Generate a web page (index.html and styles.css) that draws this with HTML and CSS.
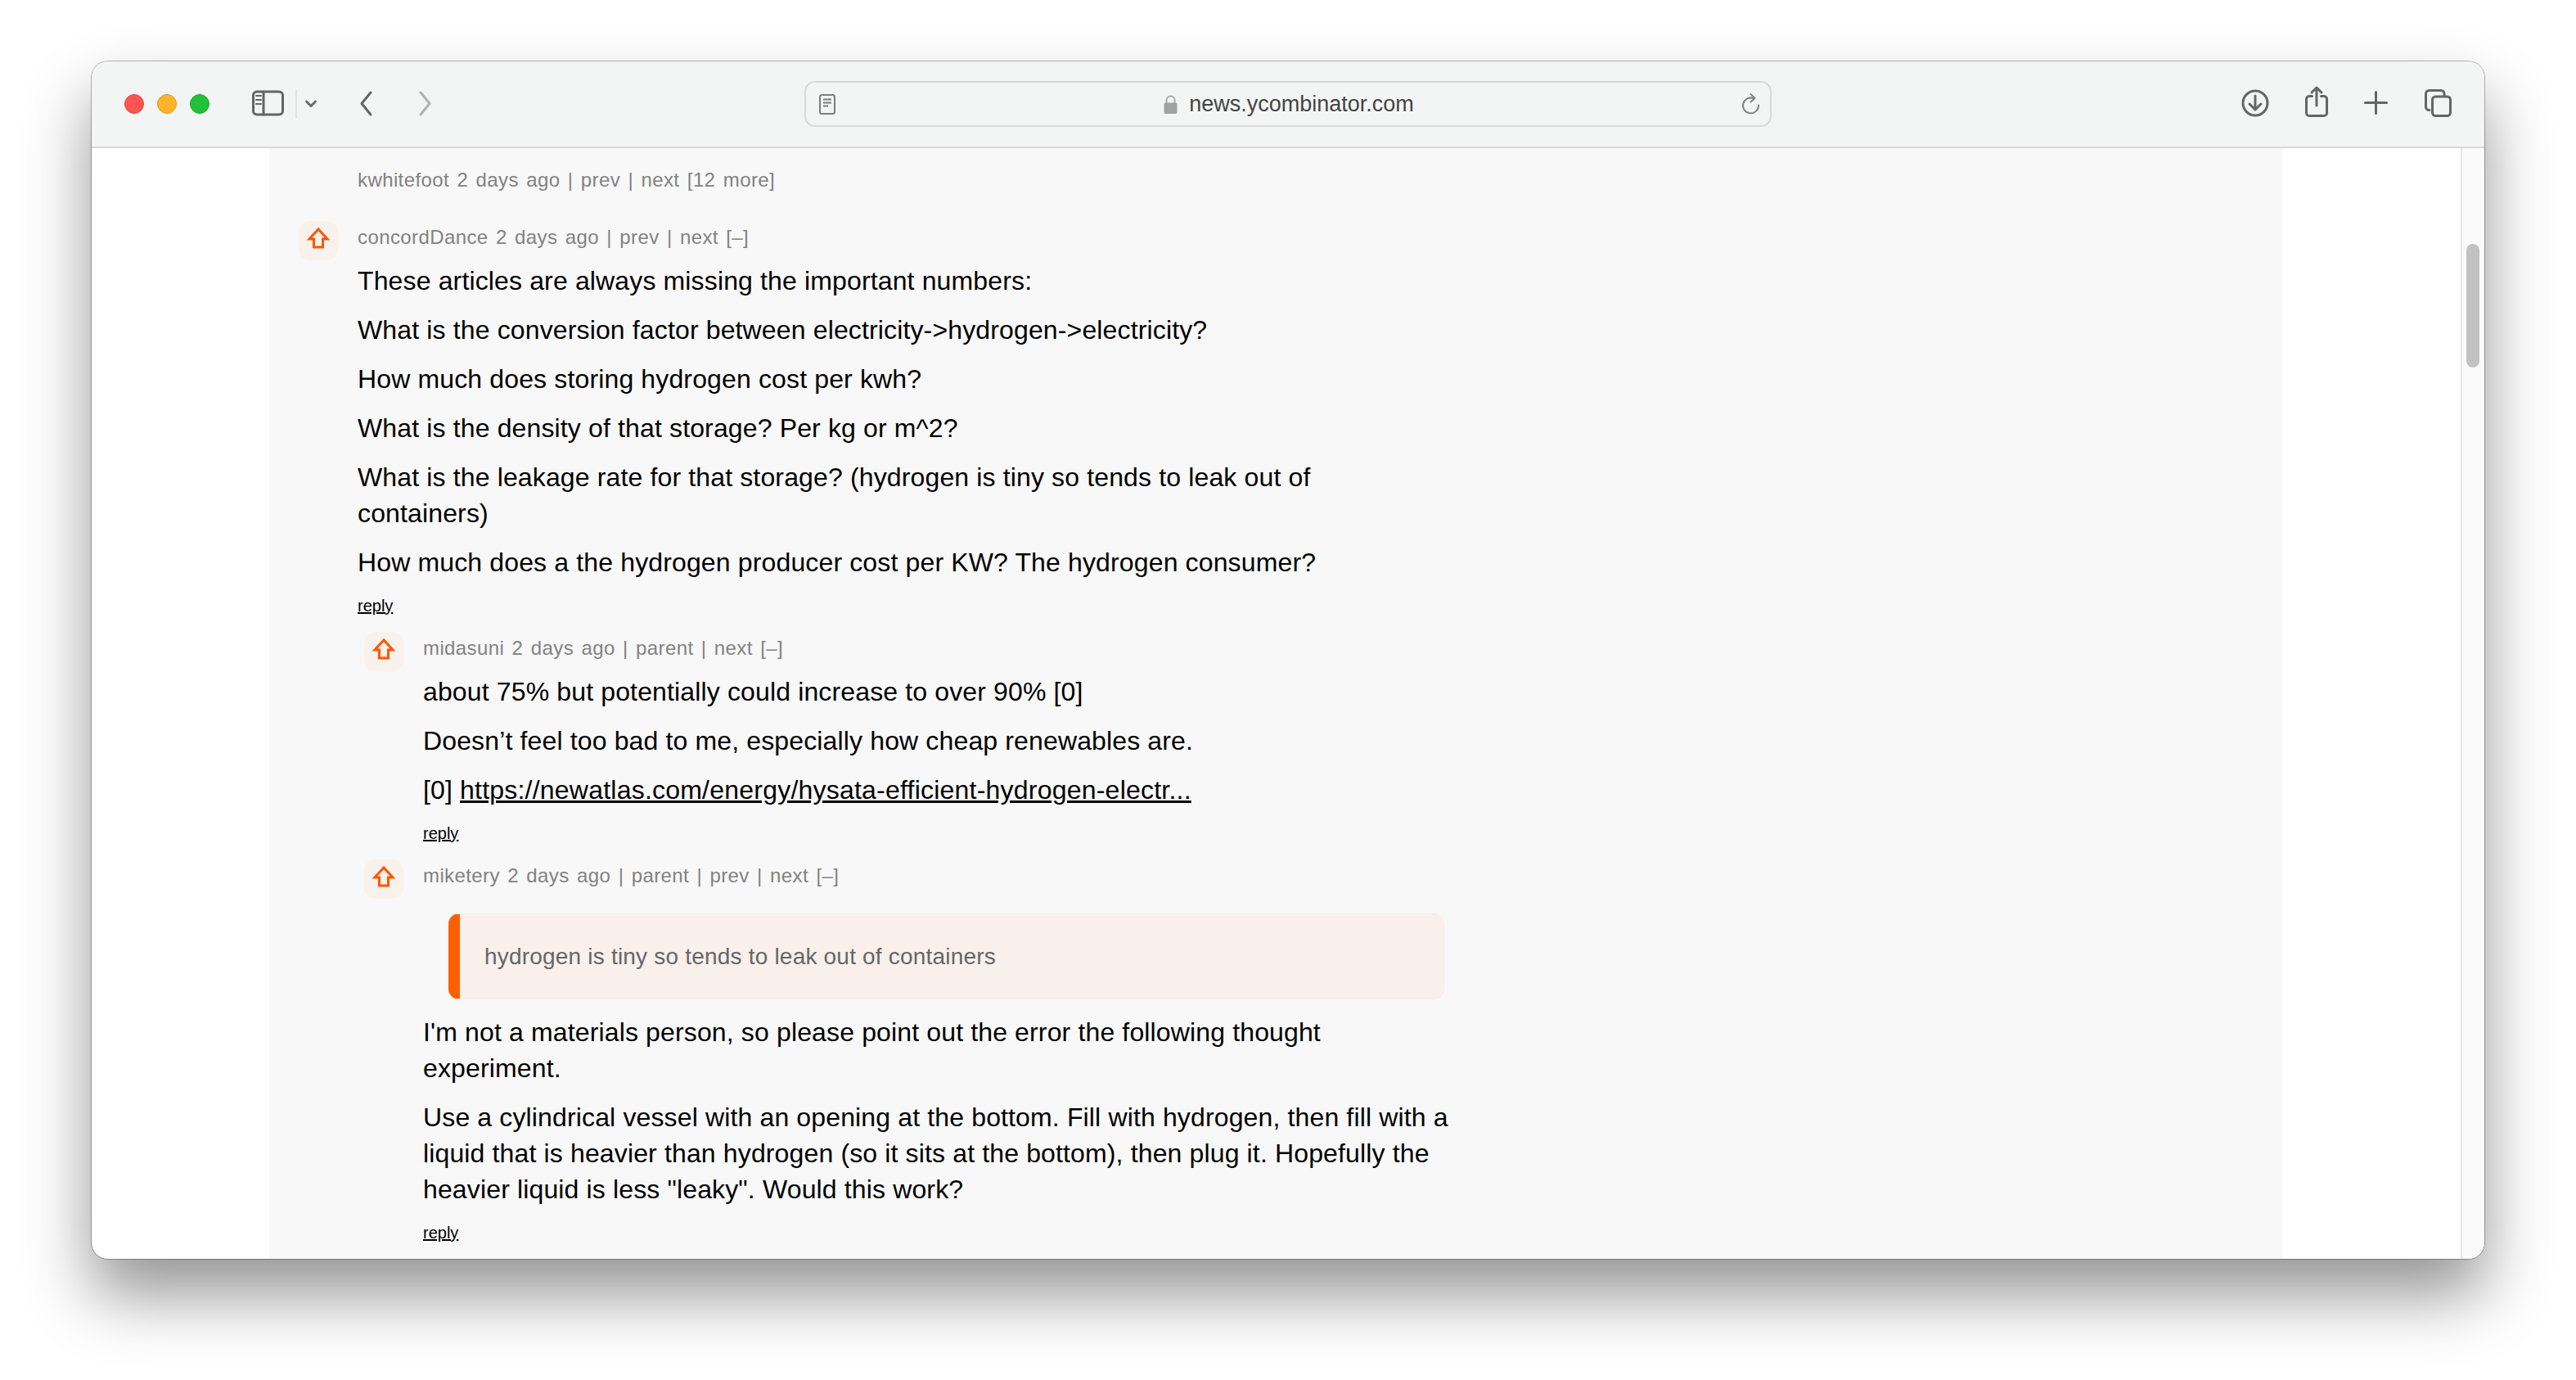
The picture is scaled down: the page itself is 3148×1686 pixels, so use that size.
FILE: index.html
```html
<!DOCTYPE html>
<html lang="en">
<head>
<meta charset="utf-8">
<title>news.ycombinator.com</title>
<link rel="stylesheet" href="styles.css">
</head>
<body>
<div class="window">
  <header class="toolbar">
    <div class="lights">
      <span class="light red"></span>
      <span class="light yellow"></span>
      <span class="light green"></span>
    </div>
    <svg class="ico w39 sidebar-ico" viewBox="0 0 39 36"><rect x="1.5" y="3" width="36" height="28" rx="4.5"/><path d="M14 3v28"/><path class="thin" d="M5 8h6M5 13h6M5 18h6"/></svg>
    <span class="divider"></span>
    <svg class="ico w14 chevron" viewBox="0 0 14 36"><path d="M1.5 15L7 20.5 12.5 15"/></svg>
    <svg class="ico w16 back" viewBox="0 0 16 36"><path d="M14 4L3 17.5 14 31"/></svg>
    <svg class="ico w15 forward" viewBox="0 0 15 36"><path d="M2 4L13 17.5 2 31"/></svg>
    <div class="urlbar">
      <svg class="reader" viewBox="0 0 20 25"><rect x="1" y="1" width="18" height="23" rx="2.5"/><path d="M5 6.5h10M5 10.5h10M5 14.5h6"/></svg>
      <div class="address">
        <svg class="lock" viewBox="0 0 17 23"><path class="shackle" d="M3.5 11V6.5a5 5 0 0 1 10 0V11"/><rect class="lockbody" x="0.5" y="9.5" width="16" height="13.5" rx="2"/></svg>
        <span class="host">news.ycombinator.com</span>
      </div>
      <svg class="refresh" viewBox="0 0 22 26"><path d="M14.5 6.3A9.5 9.5 0 1 0 20 14.5"/><path d="M10.5 1l5 5-5 4.5"/></svg>
    </div>
    <svg class="ico w32 download" viewBox="0 0 32 36"><circle cx="16" cy="17" r="15"/><path d="M16 8v17M9 18l7 7 7-7"/></svg>
    <svg class="ico w28 share" viewBox="0 0 28 36"><path d="M8.5 8.5H5A3.5 3.5 0 0 0 1.5 12v17A3.5 3.5 0 0 0 5 32.5h18a3.5 3.5 0 0 0 3.5-3.5V12A3.5 3.5 0 0 0 23 8.5h-3.5"/><path d="M14 20V-2M8 4l6-6 6 6"/></svg>
    <svg class="ico w27 plus" viewBox="0 0 27 36"><path d="M0.5 16.5h26M13.5 3.5v26"/></svg>
    <svg class="ico w33 tabs" viewBox="0 0 33 36"><path d="M6 25.5H5.500A4 4 0 0 1 1.500 21.500V5.500A4 4 0 0 1 5.500 1.500H20A4 4 0 0 1 24 5.500V8"/><rect x="9.500" y="9" width="22" height="23.500" rx="4"/></svg>
  </header>
  <main class="viewport">
    <div class="page">
      <div class="panel">
        <div class="meta top-meta">kwhitefoot 2 days ago | prev | next [12 more]</div>

        <article class="comment">
          <div class="vote"><svg class="arrow" viewBox="0 0 26 26"><path d="M13 2L2 14h5.500v10h11V14H24z"/></svg></div>
          <div class="body">
            <div class="meta">concordDance 2 days ago | prev | next [–]</div>
            <p>These articles are always missing the important numbers:</p>
            <p>What is the conversion factor between electricity-&gt;hydrogen-&gt;electricity?</p>
            <p>How much does storing hydrogen cost per kwh?</p>
            <p>What is the density of that storage? Per kg or m^2?</p>
            <p>What is the leakage rate for that storage? (hydrogen is tiny so tends to leak out of containers)</p>
            <p>How much does a the hydrogen producer cost per KW? The hydrogen consumer?</p>
            <a class="reply">reply</a>
          </div>
        </article>

        <article class="comment nested">
          <div class="vote"><svg class="arrow" viewBox="0 0 26 26"><path d="M13 2L2 14h5.500v10h11V14H24z"/></svg></div>
          <div class="body">
            <div class="meta">midasuni 2 days ago | parent | next [–]</div>
            <p>about 75% but potentially could increase to over 90% [0]</p>
            <p>Doesn’t feel too bad to me, especially how cheap renewables are.</p>
            <p>[0] <a class="link">https://newatlas.com/energy/hysata-efficient-hydrogen-electr...</a></p>
            <a class="reply">reply</a>
          </div>
        </article>

        <article class="comment nested">
          <div class="vote"><svg class="arrow" viewBox="0 0 26 26"><path d="M13 2L2 14h5.500v10h11V14H24z"/></svg></div>
          <div class="body">
            <div class="meta">miketery 2 days ago | parent | prev | next [–]</div>
            <blockquote class="quote">hydrogen is tiny so tends to leak out of containers</blockquote>
            <p>I'm not a materials person, so please point out the error the following thought experiment.</p>
            <p>Use a cylindrical vessel with an opening at the bottom. Fill with hydrogen, then fill with a liquid that is heavier than hydrogen (so it sits at the bottom), then plug it. Hopefully the heavier liquid is less "leaky". Would this work?</p>
            <a class="reply">reply</a>
          </div>
        </article>
      </div>
    </div>
    <aside class="gutter"><span class="thumb"></span></aside>
  </main>
</div>
</body>
</html>
```

FILE: styles.css
```css
* { box-sizing: border-box; }

html, body {
  margin: 0;
  height: 100%;
  background: #fff;
  overflow: hidden;
}

body {
  padding: 75px 112px 0;
  font-family: "Liberation Sans", Arial, sans-serif;
}

.window {
  width: 2924px;
  height: 1463px;
  border-radius: 20px;
  background: #fff;
  overflow: hidden;
  display: flex;
  flex-direction: column;
  box-shadow: 0 0 0 1px rgba(0, 0, 0, .28), 0 44px 80px rgba(0, 0, 0, .42);
}

.toolbar {
  flex: none;
  height: 106px;
  display: flex;
  align-items: center;
  padding: 0 0 0 40px;
  background: #f3f5f4;
  border-bottom: 2px solid #d9d9d9;
}

.lights { display: flex; gap: 16px; }
.light { width: 24px; height: 24px; border-radius: 50%; }
.red { background: #ff5550; border: 1px solid #e2453f; }
.yellow { background: #ffb32a; border: 1px solid #e09c1c; }
.green { background: #23c03a; border: 1px solid #1ca92f; }

.ico {
  flex: none;
  height: 36px;
  overflow: visible;
  fill: none;
  stroke: #636665;
  stroke-width: 3;
  stroke-linecap: round;
  stroke-linejoin: round;
}
.w39 { width: 39px; }
.w14 { width: 14px; }
.w16 { width: 16px; }
.w15 { width: 15px; }
.w32 { width: 32px; }
.w28 { width: 28px; }
.w27 { width: 27px; }
.w33 { width: 33px; }
.thin { stroke-width: 2; }

.sidebar-ico { margin-left: 52px; }
.divider { flex: none; width: 2px; height: 36px; margin-left: 14px; background: #e3e4e4; }
.chevron { margin-left: 10px; stroke: #6a6c70; }
.back { margin-left: 52px; }
.forward { margin-left: 57px; stroke: #b0b2b1; }

.urlbar {
  flex: none;
  width: 1182px;
  height: 56px;
  margin-left: 456px;
  padding: 0 12px 0 16px;
  display: flex;
  align-items: center;
  border: 2px solid #d8dad9;
  border-radius: 13px;
}
.reader { width: 20px; height: 25px; fill: none; stroke: #7d7f7f; stroke-width: 2; }
.address { flex: 1; display: flex; align-items: center; justify-content: center; gap: 14px; }
.lock { width: 17px; height: 23px; }
.shackle { fill: none; stroke: #a8a8a8; stroke-width: 2; }
.lockbody { fill: #a2a2a2; }
.host { font-size: 27px; line-height: 34px; color: #444; }
.refresh { width: 22px; height: 26px; fill: none; stroke: #808282; stroke-width: 2; stroke-linecap: round; stroke-linejoin: round; }

.download { margin-left: 575px; }
.share { margin-left: 45px; }
.plus { margin-left: 45px; }
.tabs { margin-left: 46px; }

.viewport { flex: 1; min-height: 0; display: flex; }
.page { flex: 1; padding: 0 218px 0 217px; overflow: hidden; }
.panel { height: 100%; padding-top: 21px; background: #f8f8f8; overflow: hidden; }

.gutter {
  flex: none;
  width: 29px;
  padding: 117px 6px 0 5px;
  background: #fafafa;
  border-left: 2px solid #e6e6e6;
}
.thumb { display: block; width: 16px; height: 151px; border-radius: 8px; background: #c1c1c1; }

.meta { font-size: 24px; line-height: 36px; color: #828282; letter-spacing: .4px; word-spacing: 2.3px; }
.top-meta { margin: 0 0 32px 108px; }

.comment { display: flex; gap: 24px; margin-left: 36px; margin-bottom: 18px; }
.nested { margin-left: 116px; }

.vote {
  flex: none;
  width: 48px;
  height: 48px;
  padding-top: 8px;
  display: flex;
  align-items: flex-start;
  justify-content: center;
  border-radius: 14px;
  background: #f9f1ec;
}
.arrow { width: 26px; height: 26px; overflow: visible; fill: none; stroke: #ff5500; stroke-width: 3; }

.body { width: 1262px; padding-top: 2px; }
.body .meta { margin-bottom: 13px; }
.body p { margin: 0 0 16px; font-size: 32px; line-height: 44px; letter-spacing: .14px; color: #000; }
.link { text-decoration: underline; letter-spacing: .22px; }
.reply { display: block; margin-top: 17px; font-size: 20px; line-height: 28px; color: #000; text-decoration: underline; }

.body .quote {
  width: 1217px;
  height: 105px;
  margin: 28px 0 18px 31px;
  padding-left: 30px;
  display: flex;
  align-items: center;
  font-size: 28px;
  letter-spacing: .2px;
  color: #666;
  background: #f9f0eb;
  border: 1px solid #f8ebe4;
  border-left: 14px solid #ff5f00;
  border-radius: 13px;
}
```
